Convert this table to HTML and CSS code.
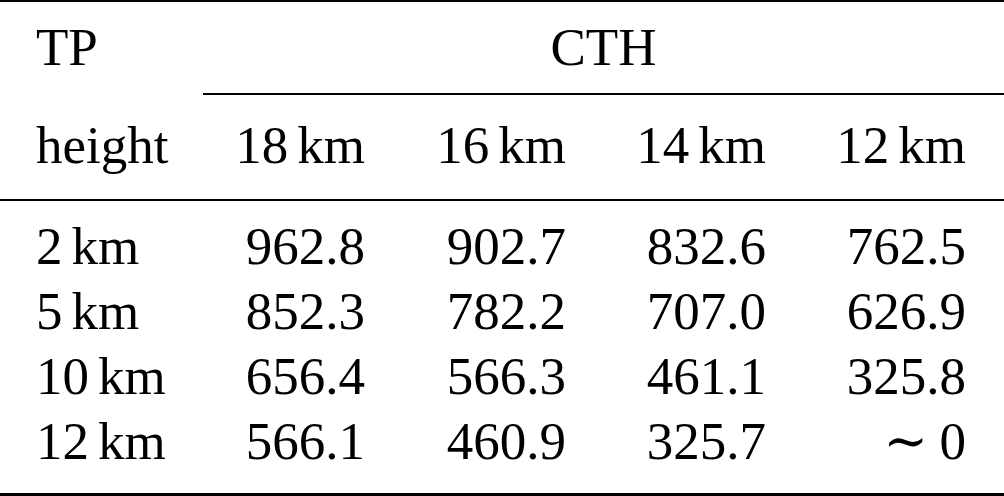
FILE: index.html
```html
<!DOCTYPE html>
<html lang="en">
<head>
    <meta charset="UTF-8">
    <title>TP height vs CTH</title>
    <link rel="stylesheet" href="styles.css">
</head>
<body>
    <!-- Results table -->
    <table class="results">
        <colgroup>
            <col class="col-label">
            <col class="col-a">
            <col class="col-b">
            <col class="col-a">
            <col class="col-a">
        </colgroup>
        <thead>
            <tr class="head-top">
                <th class="label">TP</th>
                <th class="group" colspan="4">CTH</th>
            </tr>
            <tr class="head-sub">
                <th class="label">height</th>
                <th>18<span class="unit">km</span></th>
                <th>16<span class="unit">km</span></th>
                <th>14<span class="unit">km</span></th>
                <th>12<span class="unit">km</span></th>
            </tr>
        </thead>
        <tbody>
            <tr class="first">
                <td class="label">2<span class="unit">km</span></td>
                <td>962.8</td>
                <td>902.7</td>
                <td>832.6</td>
                <td>762.5</td>
            </tr>
            <tr>
                <td class="label">5<span class="unit">km</span></td>
                <td>852.3</td>
                <td>782.2</td>
                <td>707.0</td>
                <td>626.9</td>
            </tr>
            <tr>
                <td class="label">10<span class="unit">km</span></td>
                <td>656.4</td>
                <td>566.3</td>
                <td>461.1</td>
                <td>325.8</td>
            </tr>
            <tr class="last">
                <td class="label">12<span class="unit">km</span></td>
                <td>566.1</td>
                <td>460.9</td>
                <td>325.7</td>
                <td><span class="sim">∼</span>0</td>
            </tr>
        </tbody>
    </table>
</body>
</html>
```

FILE: styles.css
```css
body {
    margin: 0;
    background: #fff;
    color: #000;
    font-family: 'Liberation Serif', 'DejaVu Serif', serif;
}

/* Booktabs-style table */
.results {
    width: 1004px;
    table-layout: fixed;
    border-collapse: separate;
    border-spacing: 0;
    border-top: 2px solid #000;
    border-bottom: 3px solid #000;
    font-size: 53px;
    line-height: 64px;
}

.col-label { width: 203px; }
.col-a { width: 200px; }
.col-b { width: 201px; }

.results th,
.results td {
    font-weight: normal;
    text-align: right;
    padding: 0 38px 0 0;
    white-space: nowrap;
}

.results .label {
    text-align: left;
    padding-left: 36px;
    padding-right: 0;
}

.unit {
    margin-left: 0.17em;
}

/* header rows */
.head-top th {
    padding-top: 13px;
    padding-bottom: 14px;
    border-bottom: 2px solid transparent;
}

.head-top .group {
    text-align: center;
    padding-right: 0;
    border-bottom-color: #000;
}

.head-sub th {
    padding-top: 18px;
    padding-bottom: 22px;
    border-bottom: 2px solid #000;
}

/* body rows */
.results td {
    height: 65px;
}

.first td {
    padding-top: 12px;
}

.last td {
    padding-bottom: 20px;
}

.sim {
    margin-right: 0.22em;
}
```
